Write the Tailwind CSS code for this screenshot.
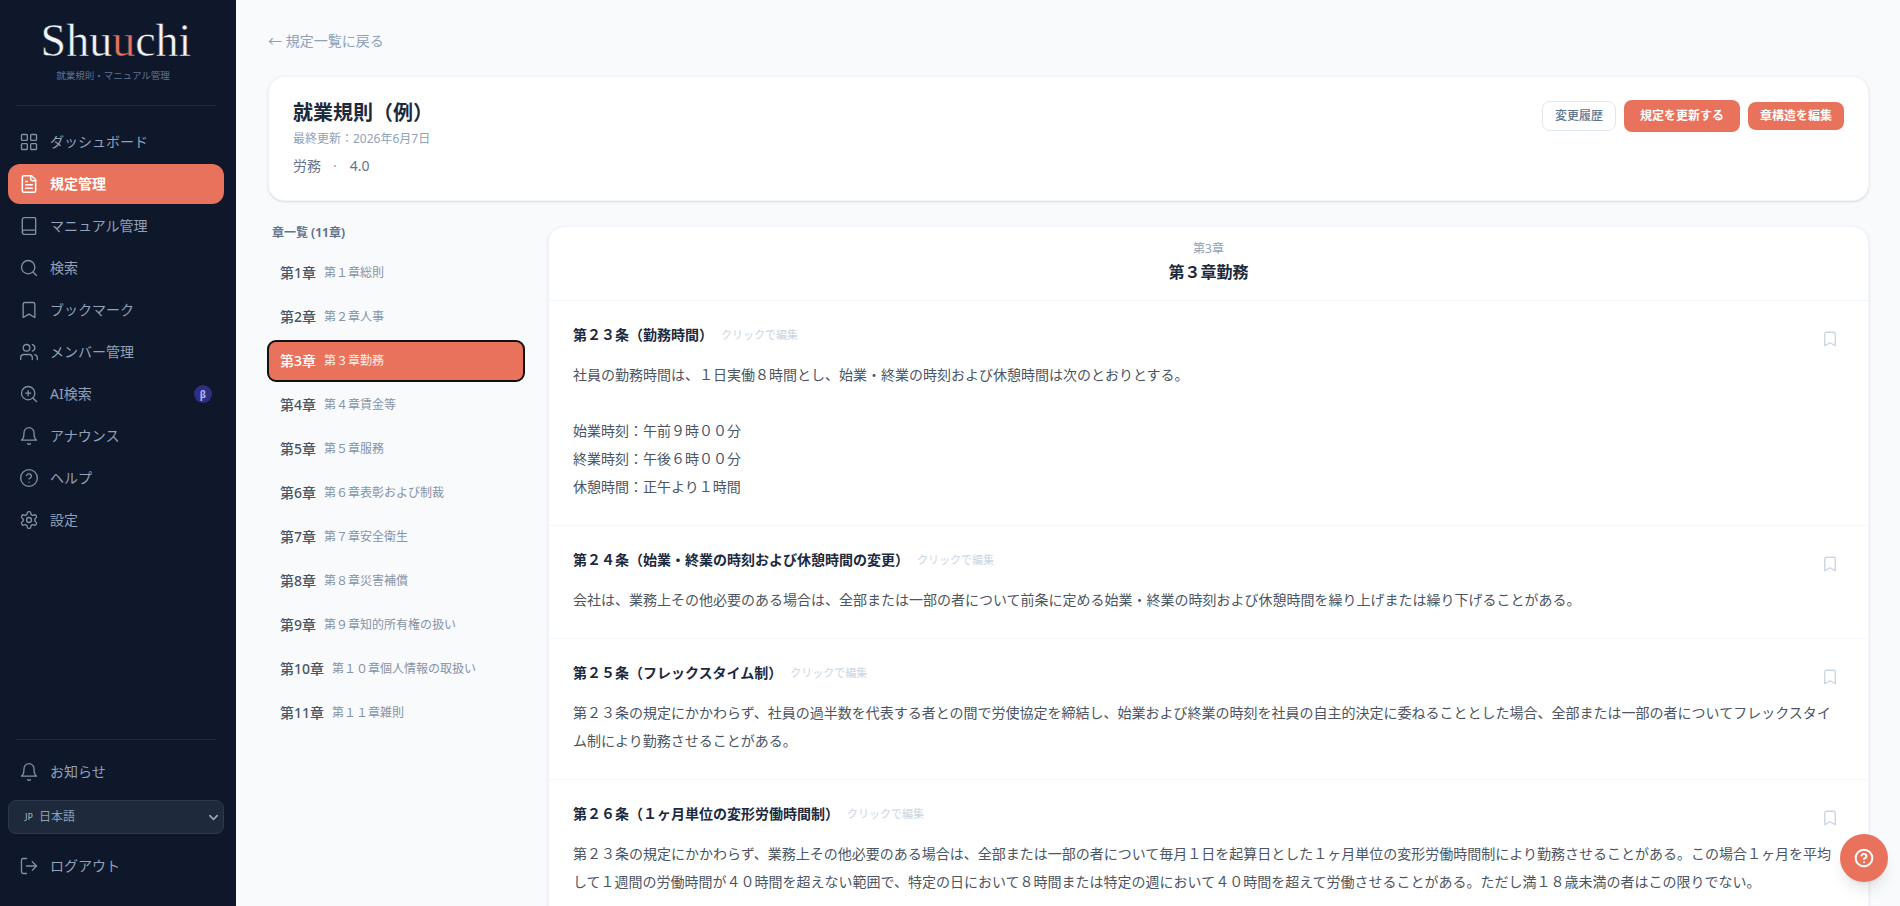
<!DOCTYPE html>
<html lang="ja">
  <head>
    <meta charset="UTF-8" />
    <title>Shuuchi</title>
    <script src="https://cdn.jsdelivr.net/npm/@tailwindcss/browser@4"></script>
  </head>
  <body class="h-screen overflow-hidden flex bg-[#f8fafc] text-[#4b5563] [font-family:'Noto_Sans','Noto_Sans_CJK_JP',sans-serif]">

    <!-- sidebar -->
    <aside class="w-[236px] shrink-0 h-full bg-[#0f172a]">
      <div class="w-[232px] h-full flex flex-col">
        <div class="pt-[16px] mx-4 h-[106px] border-b border-[#1e293b] text-center">
          <div class="text-[46px] leading-[50px] text-slate-100 [font-family:'Liberation_Serif',serif] [-webkit-text-stroke:0.5px_#0f172a]">Shu<span class="text-[#e8725b]">u</span>chi</div>
          <div class="text-[9.5px] leading-[14px] mt-[3px] pr-[6px] text-slate-500">就業規則・マニュアル管理</div>
        </div>

        <nav class="mt-4 px-2 flex flex-col gap-[2px] text-sm text-slate-400">
          <a class="h-10 flex items-center gap-[11px] px-[11px] rounded-xl">
            <svg class="w-5 h-5 text-[#8091a7]" viewBox="0 0 24 24" fill="none" stroke="currentColor" stroke-width="1.6" stroke-linecap="round" stroke-linejoin="round"><rect x="3" y="3" width="7" height="7" rx="1"/><rect x="14" y="3" width="7" height="7" rx="1"/><rect x="14" y="14" width="7" height="7" rx="1"/><rect x="3" y="14" width="7" height="7" rx="1"/></svg>
            ダッシュボード
          </a>
          <a class="h-10 flex items-center gap-[11px] px-[11px] rounded-xl bg-[#e8725b] text-white font-semibold">
            <svg class="w-5 h-5" viewBox="0 0 24 24" fill="none" stroke="currentColor" stroke-width="1.8" stroke-linecap="round" stroke-linejoin="round"><path d="M15 2H6a2 2 0 0 0-2 2v16a2 2 0 0 0 2 2h12a2 2 0 0 0 2-2V7Z"/><path d="M14 2v4a2 2 0 0 0 2 2h4"/><path d="M10 9H8"/><path d="M16 13H8"/><path d="M16 17H8"/></svg>
            規定管理
          </a>
          <a class="h-10 flex items-center gap-[11px] px-[11px] rounded-xl">
            <svg class="w-5 h-5 text-[#8091a7]" viewBox="0 0 24 24" fill="none" stroke="currentColor" stroke-width="1.6" stroke-linecap="round" stroke-linejoin="round"><path d="M4 19.5v-15A2.5 2.5 0 0 1 6.5 2H19a1 1 0 0 1 1 1v18a1 1 0 0 1-1 1H6.5a1 1 0 0 1 0-5H20"/></svg>
            マニュアル管理
          </a>
          <a class="h-10 flex items-center gap-[11px] px-[11px] rounded-xl">
            <svg class="w-5 h-5 text-[#8091a7]" viewBox="0 0 24 24" fill="none" stroke="currentColor" stroke-width="1.6" stroke-linecap="round" stroke-linejoin="round"><circle cx="11" cy="11" r="8"/><path d="m21 21-4.3-4.3"/></svg>
            検索
          </a>
          <a class="h-10 flex items-center gap-[11px] px-[11px] rounded-xl">
            <svg class="w-5 h-5 text-[#8091a7]" viewBox="0 0 24 24" fill="none" stroke="currentColor" stroke-width="1.6" stroke-linecap="round" stroke-linejoin="round"><path d="m19 21-7-4-7 4V5a2 2 0 0 1 2-2h10a2 2 0 0 1 2 2v16z"/></svg>
            ブックマーク
          </a>
          <a class="h-10 flex items-center gap-[11px] px-[11px] rounded-xl">
            <svg class="w-5 h-5 text-[#8091a7]" viewBox="0 0 24 24" fill="none" stroke="currentColor" stroke-width="1.6" stroke-linecap="round" stroke-linejoin="round"><path d="M16 21v-2a4 4 0 0 0-4-4H6a4 4 0 0 0-4 4v2"/><circle cx="9" cy="7" r="4"/><path d="M22 21v-2a4 4 0 0 0-3-3.87"/><path d="M16 3.13a4 4 0 0 1 0 7.75"/></svg>
            メンバー管理
          </a>
          <a class="h-10 flex items-center gap-[11px] px-[11px] rounded-xl">
            <svg class="w-5 h-5 text-[#8091a7]" viewBox="0 0 24 24" fill="none" stroke="currentColor" stroke-width="1.6" stroke-linecap="round" stroke-linejoin="round"><circle cx="11" cy="11" r="8"/><path d="m21 21-4.3-4.3"/><path d="M11 8v6"/><path d="M8 11h6"/></svg>
            AI検索
            <span class="ml-auto mr-[1px] w-[18px] h-[18px] rounded-full bg-[#312e81] text-[#a5b4fc] text-[10px] font-bold flex items-center justify-center">β</span>
          </a>
          <a class="h-10 flex items-center gap-[11px] px-[11px] rounded-xl">
            <svg class="w-5 h-5 text-[#8091a7]" viewBox="0 0 24 24" fill="none" stroke="currentColor" stroke-width="1.6" stroke-linecap="round" stroke-linejoin="round"><path d="M6 8a6 6 0 0 1 12 0c0 7 3 9 3 9H3s3-2 3-9"/><path d="M10.3 21a1.94 1.94 0 0 0 3.4 0"/></svg>
            アナウンス
          </a>
          <a class="h-10 flex items-center gap-[11px] px-[11px] rounded-xl">
            <svg class="w-5 h-5 text-[#8091a7]" viewBox="0 0 24 24" fill="none" stroke="currentColor" stroke-width="1.6" stroke-linecap="round" stroke-linejoin="round"><circle cx="12" cy="12" r="10"/><path d="M9.09 9a3 3 0 0 1 5.83 1c0 2-3 3-3 3"/><path d="M12 17h.01"/></svg>
            ヘルプ
          </a>
          <a class="h-10 flex items-center gap-[11px] px-[11px] rounded-xl">
            <svg class="w-5 h-5 text-[#8091a7]" viewBox="0 0 24 24" fill="none" stroke="currentColor" stroke-width="1.6" stroke-linecap="round" stroke-linejoin="round"><path d="M12.22 2h-.44a2 2 0 0 0-2 2v.18a2 2 0 0 1-1 1.73l-.43.25a2 2 0 0 1-2 0l-.15-.08a2 2 0 0 0-2.73.73l-.22.38a2 2 0 0 0 .73 2.73l.15.1a2 2 0 0 1 1 1.72v.51a2 2 0 0 1-1 1.74l-.15.09a2 2 0 0 0-.73 2.73l.22.38a2 2 0 0 0 2.73.73l.15-.08a2 2 0 0 1 2 0l.43.25a2 2 0 0 1 1 1.73V20a2 2 0 0 0 2 2h.44a2 2 0 0 0 2-2v-.18a2 2 0 0 1 1-1.73l.43-.25a2 2 0 0 1 2 0l.15.08a2 2 0 0 0 2.73-.73l.22-.39a2 2 0 0 0-.73-2.73l-.15-.08a2 2 0 0 1-1-1.74v-.5a2 2 0 0 1 1-1.74l.15-.09a2 2 0 0 0 .73-2.73l-.22-.38a2 2 0 0 0-2.73-.73l-.15.08a2 2 0 0 1-2 0l-.43-.25a2 2 0 0 1-1-1.73V4a2 2 0 0 0-2-2z"/><circle cx="12" cy="12" r="3"/></svg>
            設定
          </a>
        </nav>

        <div class="mt-auto pb-5 text-sm text-slate-400">
          <div class="mx-4 border-t border-[#1e293b] pt-3"></div>
          <div class="px-2">
            <a class="h-10 flex items-center gap-[11px] px-[11px]">
              <svg class="w-5 h-5 text-[#8091a7]" viewBox="0 0 24 24" fill="none" stroke="currentColor" stroke-width="1.6" stroke-linecap="round" stroke-linejoin="round"><path d="M6 8a6 6 0 0 1 12 0c0 7 3 9 3 9H3s3-2 3-9"/><path d="M10.3 21a1.94 1.94 0 0 0 3.4 0"/></svg>
              お知らせ
            </a>
            <div class="mt-2 h-[34px] flex items-center rounded-lg bg-[#1e293b] border border-[#2d3a4d] pl-[16px] pr-[4px] text-slate-400">
              <span class="text-[9px] font-medium w-[14px] tracking-tight">JP</span>
              <span class="text-xs">日本語</span>
              <svg class="ml-auto w-[11px] h-[11px] text-slate-400" viewBox="0 0 24 24" fill="none" stroke="currentColor" stroke-width="4" stroke-linecap="round" stroke-linejoin="round"><path d="m4 8 8 8 8-8"/></svg>
            </div>
            <a class="mt-3 h-10 flex items-center gap-[11px] px-[11px]">
              <svg class="w-5 h-5 text-[#8091a7]" viewBox="0 0 24 24" fill="none" stroke="currentColor" stroke-width="1.6" stroke-linecap="round" stroke-linejoin="round"><path d="M9 21H5a2 2 0 0 1-2-2V5a2 2 0 0 1 2-2h4"/><path d="m16 17 5-5-5-5"/><path d="M21 12H9"/></svg>
              ログアウト
            </a>
          </div>
        </div>
      </div>
    </aside>

    <!-- main -->
    <main class="flex-1 min-w-0 h-full overflow-hidden pl-8 pr-[31px] pt-[31px]">
      <a class="block h-5 text-sm leading-5 text-slate-400"><span class="[font-family:'Noto_Sans_CJK_JP'] leading-none">←</span> 規定一覧に戻る</a>

      <section class="mt-[25px] mb-[25px] h-[125px] bg-white rounded-2xl border border-slate-100 shadow-sm px-6 pt-[22px] flex justify-between items-start">
        <div>
          <h1 class="text-xl leading-7 font-bold text-slate-800">就業規則（例）</h1>
          <p class="mt-1 text-xs leading-4 text-slate-400">最終更新：2026年6月7日</p>
          <p class="mt-[9px] text-sm leading-5 text-slate-500">労務<span class="ml-3 mr-[13px] text-slate-400">·</span>4.0</p>
        </div>
        <div class="mt-px flex items-center gap-2 text-xs">
          <button class="h-[30px] px-3 rounded-lg border border-slate-200 bg-white text-slate-500 font-medium">変更履歴</button>
          <button class="h-8 px-4 rounded-lg bg-[#e8725b] text-white font-semibold">規定を更新する</button>
          <button class="h-7 px-3 rounded-lg bg-[#e8725b] text-white font-semibold">章構造を編集</button>
        </div>
      </section>

      <div class="flex gap-6 items-start">
        <div class="w-[256px] shrink-0">
          <div class="pl-1 text-xs leading-[14px] font-bold text-slate-500 mb-[13px]">章一覧 (11章)</div>
          <ul class="flex flex-col gap-1">
            <li class="h-10 px-3 flex items-center gap-2 rounded-lg"><span class="text-sm font-medium">第1章</span><span class="text-xs text-[#8793a6]">第１章総則</span></li>
            <li class="h-10 px-3 flex items-center gap-2 rounded-lg"><span class="text-sm font-medium">第2章</span><span class="text-xs text-[#8793a6]">第２章人事</span></li>
            <li class="h-10 px-3 flex items-center gap-2 rounded-lg bg-[#e8725b] text-white outline-2 outline-[#111] -outline-offset-1"><span class="text-sm font-medium">第3章</span><span class="text-xs text-white/90">第３章勤務</span></li>
            <li class="h-10 px-3 flex items-center gap-2 rounded-lg"><span class="text-sm font-medium">第4章</span><span class="text-xs text-[#8793a6]">第４章賃金等</span></li>
            <li class="h-10 px-3 flex items-center gap-2 rounded-lg"><span class="text-sm font-medium">第5章</span><span class="text-xs text-[#8793a6]">第５章服務</span></li>
            <li class="h-10 px-3 flex items-center gap-2 rounded-lg"><span class="text-sm font-medium">第6章</span><span class="text-xs text-[#8793a6]">第６章表彰および制裁</span></li>
            <li class="h-10 px-3 flex items-center gap-2 rounded-lg"><span class="text-sm font-medium">第7章</span><span class="text-xs text-[#8793a6]">第７章安全衛生</span></li>
            <li class="h-10 px-3 flex items-center gap-2 rounded-lg"><span class="text-sm font-medium">第8章</span><span class="text-xs text-[#8793a6]">第８章災害補償</span></li>
            <li class="h-10 px-3 flex items-center gap-2 rounded-lg"><span class="text-sm font-medium">第9章</span><span class="text-xs text-[#8793a6]">第９章知的所有権の扱い</span></li>
            <li class="h-10 px-3 flex items-center gap-2 rounded-lg"><span class="text-sm font-medium">第10章</span><span class="text-xs text-[#8793a6]">第１０章個人情報の取扱い</span></li>
            <li class="h-10 px-3 flex items-center gap-2 rounded-lg"><span class="text-sm font-medium">第11章</span><span class="text-xs text-[#8793a6]">第１１章雑則</span></li>
          </ul>
        </div>

        <div class="flex-1 min-w-0 bg-white rounded-2xl border border-slate-100 shadow-sm">
          <header class="h-[74px] pt-[14px] border-b border-slate-100 text-center">
            <div class="text-xs leading-4 text-slate-400">第3章</div>
            <h2 class="mt-[3px] text-base leading-6 font-semibold text-slate-800">第３章勤務</h2>
          </header>

          <article class="relative px-6 py-6 border-b border-[#f5f7fa]">
            <div class="flex items-center gap-2 mb-4">
              <h3 class="text-sm leading-5 font-bold text-slate-800">第２３条（勤務時間）</h3>
              <span class="text-[11px] text-slate-300">クリックで編集</span>
            </div>
            <svg class="absolute top-[29px] right-[29px] w-[18px] h-[18px] text-slate-300" viewBox="0 0 24 24" fill="none" stroke="currentColor" stroke-width="1.8" stroke-linecap="round" stroke-linejoin="round"><path d="m19 21-7-4-7 4V5a2 2 0 0 1 2-2h10a2 2 0 0 1 2 2v16z"/></svg>
            <p class="text-sm leading-7 whitespace-pre-line">社員の勤務時間は、１日実働８時間とし、始業・終業の時刻および休憩時間は次のとおりとする。

始業時刻：午前９時００分
終業時刻：午後６時００分
休憩時間：正午より１時間</p>
          </article>

          <article class="relative px-6 py-6 border-b border-[#f5f7fa]">
            <div class="flex items-center gap-2 mb-4">
              <h3 class="text-sm leading-5 font-bold text-slate-800">第２４条（始業・終業の時刻および休憩時間の変更）</h3>
              <span class="text-[11px] text-slate-300">クリックで編集</span>
            </div>
            <svg class="absolute top-[29px] right-[29px] w-[18px] h-[18px] text-slate-300" viewBox="0 0 24 24" fill="none" stroke="currentColor" stroke-width="1.8" stroke-linecap="round" stroke-linejoin="round"><path d="m19 21-7-4-7 4V5a2 2 0 0 1 2-2h10a2 2 0 0 1 2 2v16z"/></svg>
            <p class="text-sm leading-7">会社は、業務上その他必要のある場合は、全部または一部の者について前条に定める始業・終業の時刻および休憩時間を繰り上げまたは繰り下げることがある。</p>
          </article>

          <article class="relative px-6 py-6 border-b border-[#f5f7fa]">
            <div class="flex items-center gap-2 mb-4">
              <h3 class="text-sm leading-5 font-bold text-slate-800">第２５条（フレックスタイム制）</h3>
              <span class="text-[11px] text-slate-300">クリックで編集</span>
            </div>
            <svg class="absolute top-[29px] right-[29px] w-[18px] h-[18px] text-slate-300" viewBox="0 0 24 24" fill="none" stroke="currentColor" stroke-width="1.8" stroke-linecap="round" stroke-linejoin="round"><path d="m19 21-7-4-7 4V5a2 2 0 0 1 2-2h10a2 2 0 0 1 2 2v16z"/></svg>
            <p class="text-sm leading-7">第２３条の規定にかかわらず、社員の過半数を代表する者との間で労使協定を締結し、始業および終業の時刻を社員の自主的決定に委ねることとした場合、全部または一部の者についてフレックスタイム制により勤務させることがある。</p>
          </article>

          <article class="relative px-6 py-6">
            <div class="flex items-center gap-2 mb-4">
              <h3 class="text-sm leading-5 font-bold text-slate-800">第２６条（１ヶ月単位の変形労働時間制）</h3>
              <span class="text-[11px] text-slate-300">クリックで編集</span>
            </div>
            <svg class="absolute top-[29px] right-[29px] w-[18px] h-[18px] text-slate-300" viewBox="0 0 24 24" fill="none" stroke="currentColor" stroke-width="1.8" stroke-linecap="round" stroke-linejoin="round"><path d="m19 21-7-4-7 4V5a2 2 0 0 1 2-2h10a2 2 0 0 1 2 2v16z"/></svg>
            <p class="text-sm leading-7">第２３条の規定にかかわらず、業務上その他必要のある場合は、全部または一部の者について毎月１日を起算日とした１ヶ月単位の変形労働時間制により勤務させることがある。この場合１ヶ月を平均して１週間の労働時間が４０時間を超えない範囲で、特定の日において８時間または特定の週において４０時間を超えて労働させることがある。ただし満１８歳未満の者はこの限りでない。</p>
          </article>
        </div>
      </div>
    </main>

    <button class="fixed right-3 bottom-6 w-12 h-12 rounded-full bg-[#e8725b] text-white shadow-lg flex items-center justify-center">
      <svg class="w-5 h-5" viewBox="0 0 24 24" fill="none" stroke="currentColor" stroke-width="2.4" stroke-linecap="round" stroke-linejoin="round"><circle cx="12" cy="12" r="10"/><path d="M9.09 9a3 3 0 0 1 5.83 1c0 2-3 3-3 3"/><path d="M12 17h.01"/></svg>
    </button>
  </body>
</html>
